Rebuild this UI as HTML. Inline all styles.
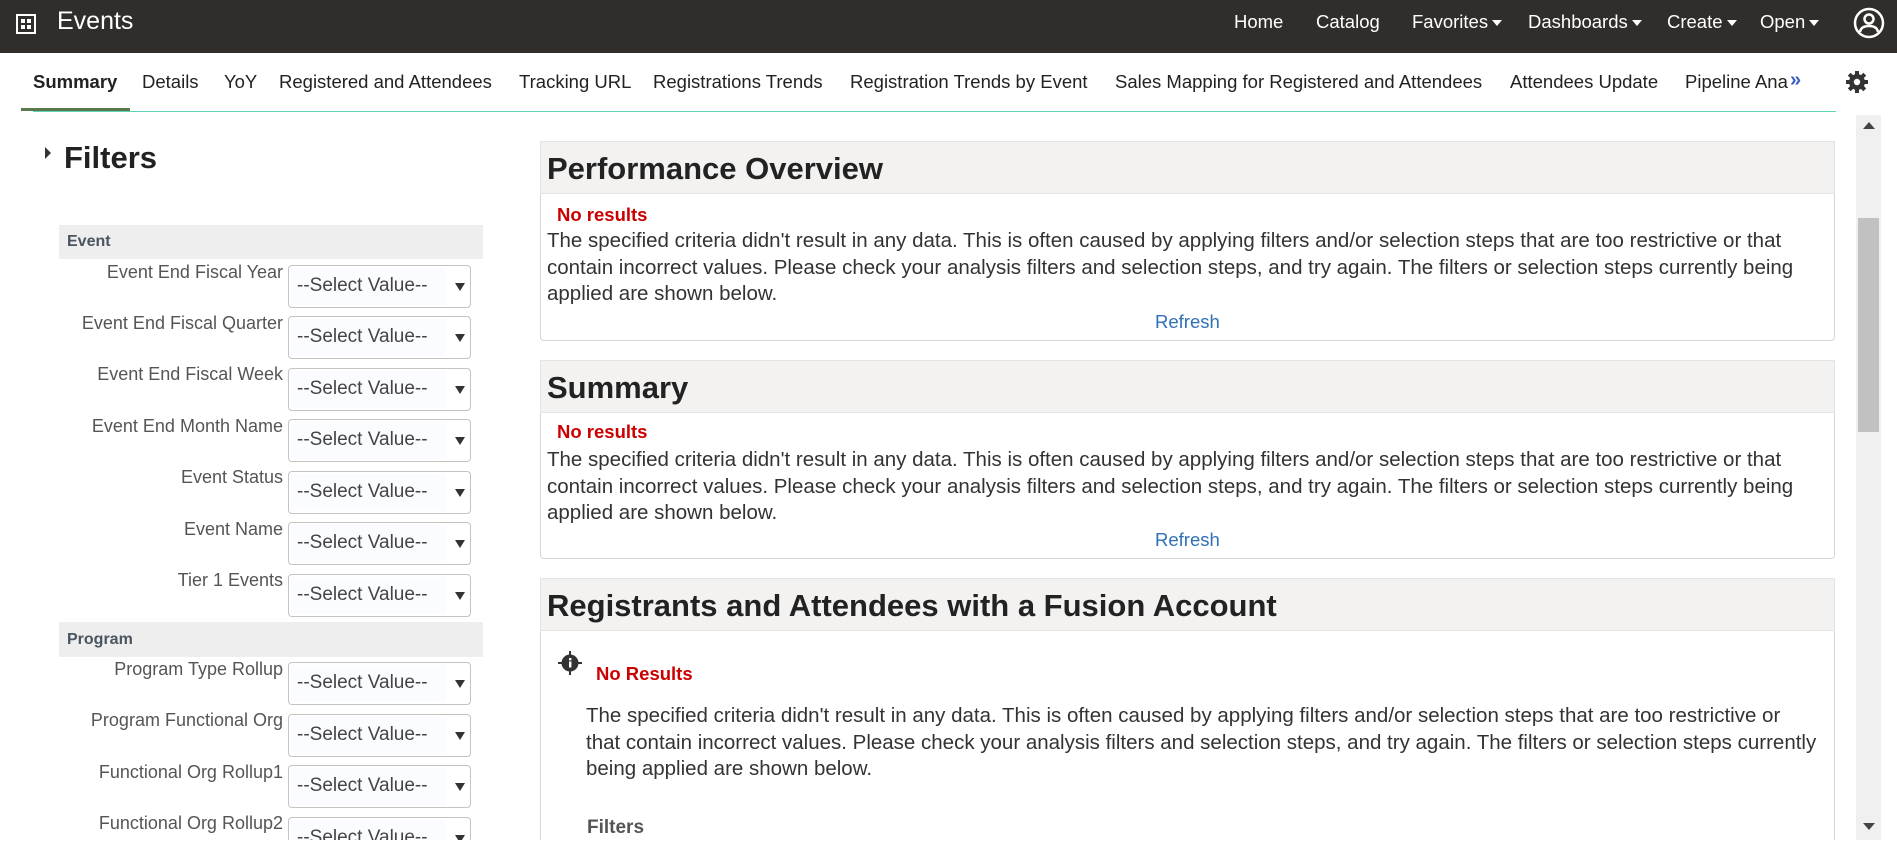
<!DOCTYPE html>
<html><head><meta charset="utf-8">
<style>
*{margin:0;padding:0;box-sizing:border-box}
body{width:1897px;height:857px;overflow:hidden;background:#fff;font-family:"Liberation Sans",sans-serif;position:relative;color:#333}
.a{position:absolute;white-space:nowrap}
.hdr{position:absolute;left:0;top:0;width:1897px;height:53px;background:#312d2a}
.nav{color:#fff;font-size:18.5px;top:11px}
.tri{display:inline-block;width:0;height:0;border-left:5px solid transparent;border-right:5px solid transparent;border-top:6px solid #fff;margin-left:4px;vertical-align:middle}
.tab{font-size:18.5px;color:#222;top:71px}
.lbl{font-size:18px;color:#555;text-align:right;right:1614px}
.sel{position:absolute;left:288px;width:183px;height:43px;border:1px solid #c4c4c4;border-radius:4px;background:#fff}
.sel .in{position:absolute;left:2px;top:2px;width:155px;height:37px;background:#fbfcff;font-size:19px;color:#444;padding:7px 0 0 6px}
.sel .ar{position:absolute;left:166px;top:17px;width:0;height:0;border-left:5px solid transparent;border-right:5px solid transparent;border-top:8px solid #333}
.sec{position:absolute;left:59px;width:424px;background:#eeeeee;font-size:16px;font-weight:bold;color:#4a5560;padding-left:8px}
.ph{position:absolute;left:540px;width:1295px;background:#f3f2f1;border:1px solid #e4e4e4;font-size:31px;font-weight:bold;color:#222;padding-left:6px}
.pb{position:absolute;left:540px;width:1295px;border:1px solid #d4d6dc;border-top:none;border-radius:0 0 4px 4px}
.nr{color:#cc0000;font-weight:bold;font-size:18.5px}
.tx{font-size:20.5px;color:#333;line-height:26.5px}
.rf{color:#2f6fb5;font-size:18.5px}
</style></head><body>
<div class="hdr"></div>
<svg class="a" style="left:16px;top:14px" width="20" height="20" viewBox="0 0 20 20"><rect x="1" y="1" width="18" height="18" fill="none" stroke="#fff" stroke-width="2"/><rect x="5" y="5" width="4" height="4" fill="#fff"/><rect x="11" y="5" width="4" height="4" fill="#fff"/><rect x="5" y="11" width="4" height="4" fill="#fff"/><rect x="11" y="11" width="4" height="4" fill="#fff"/></svg>
<div class="a" style="left:57px;top:7px;color:#fff;font-size:25px">Events</div>
<div class="a nav" style="left:1234px">Home</div>
<div class="a nav" style="left:1316px">Catalog</div>
<div class="a nav" style="left:1412px">Favorites<span class="tri"></span></div>
<div class="a nav" style="left:1528px">Dashboards<span class="tri"></span></div>
<div class="a nav" style="left:1667px">Create<span class="tri"></span></div>
<div class="a nav" style="left:1760px">Open<span class="tri"></span></div>
<svg class="a" style="left:1853px;top:7px" width="32" height="32" viewBox="0 0 32 32"><circle cx="16" cy="16" r="14" fill="none" stroke="#fff" stroke-width="2.5"/><circle cx="16" cy="12" r="4.5" fill="none" stroke="#fff" stroke-width="2.5"/><path d="M7 25 Q8 19 16 19 Q24 19 25 25" fill="none" stroke="#fff" stroke-width="2.5"/></svg>

<div class="a tab" style="left:33px;font-weight:bold">Summary</div>
<div class="a tab" style="left:142px">Details</div>
<div class="a tab" style="left:224px">YoY</div>
<div class="a tab" style="left:279px">Registered and Attendees</div>
<div class="a tab" style="left:519px">Tracking URL</div>
<div class="a tab" style="left:653px">Registrations Trends</div>
<div class="a tab" style="left:850px">Registration Trends by Event</div>
<div class="a tab" style="left:1115px">Sales Mapping for Registered and Attendees</div>
<div class="a tab" style="left:1510px">Attendees Update</div>
<div class="a tab" style="left:1685px">Pipeline Ana</div>
<div class="a" style="left:1790px;top:69px;color:#3b5fc0;font-size:20px;font-weight:bold">»</div>
<svg class="a" style="left:1845px;top:70px" width="24" height="24" viewBox="0 0 24 24"><g fill="#333"><circle cx="12" cy="12" r="8"/><rect x="10" y="1" width="4" height="22"/><rect x="1" y="10" width="22" height="4"/><rect x="10" y="1" width="4" height="22" transform="rotate(45 12 12)"/><rect x="10" y="1" width="4" height="22" transform="rotate(-45 12 12)"/></g><circle cx="12" cy="12" r="3.2" fill="#fff"/></svg>
<div class="a" style="left:21px;top:108px;width:109px;height:3px;background:#5a7a4e"></div>
<div class="a" style="left:33px;top:111px;width:1803px;height:1px;background:#5fd3b5"></div>

<div class="a" style="left:1856px;top:115px;width:25px;height:725px;background:#f0f0f0"></div>
<div class="a" style="left:1858px;top:218px;width:21px;height:214px;background:#c1c1c1"></div>
<div class="a" style="left:1863px;top:122px;border-left:6px solid transparent;border-right:6px solid transparent;border-bottom:7px solid #444"></div>
<div class="a" style="left:1863px;top:823px;border-left:6px solid transparent;border-right:6px solid transparent;border-top:7px solid #444"></div>

<div class="a" style="left:45px;top:147px;border-top:6px solid transparent;border-bottom:6px solid transparent;border-left:6px solid #333"></div>
<div class="a" style="left:64px;top:140px;font-size:31px;font-weight:bold;color:#222">Filters</div>

<div class="sec" style="top:225px;height:34px;line-height:34px">Event</div>
<div class="a lbl" style="top:262px">Event End Fiscal Year</div><div class="sel" style="top:265px"><div class="in">--Select Value--</div><div class="ar"></div></div>
<div class="a lbl" style="top:313px">Event End Fiscal Quarter</div><div class="sel" style="top:316px"><div class="in">--Select Value--</div><div class="ar"></div></div>
<div class="a lbl" style="top:364px">Event End Fiscal Week</div><div class="sel" style="top:368px"><div class="in">--Select Value--</div><div class="ar"></div></div>
<div class="a lbl" style="top:416px">Event End Month Name</div><div class="sel" style="top:419px"><div class="in">--Select Value--</div><div class="ar"></div></div>
<div class="a lbl" style="top:467px">Event Status</div><div class="sel" style="top:471px"><div class="in">--Select Value--</div><div class="ar"></div></div>
<div class="a lbl" style="top:519px">Event Name</div><div class="sel" style="top:522px"><div class="in">--Select Value--</div><div class="ar"></div></div>
<div class="a lbl" style="top:570px">Tier 1 Events</div><div class="sel" style="top:574px"><div class="in">--Select Value--</div><div class="ar"></div></div>
<div class="sec" style="top:622px;height:35px;line-height:35px">Program</div>
<div class="a lbl" style="top:659px">Program Type Rollup</div><div class="sel" style="top:662px"><div class="in">--Select Value--</div><div class="ar"></div></div>
<div class="a lbl" style="top:710px">Program Functional Org</div><div class="sel" style="top:714px"><div class="in">--Select Value--</div><div class="ar"></div></div>
<div class="a lbl" style="top:762px">Functional Org Rollup1</div><div class="sel" style="top:765px"><div class="in">--Select Value--</div><div class="ar"></div></div>
<div class="a lbl" style="top:813px">Functional Org Rollup2</div><div class="sel" style="top:817px;height:23px;border-bottom:none;border-radius:4px 4px 0 0;overflow:hidden"><div class="in">--Select Value--</div><div class="ar"></div></div>

<div class="ph" style="top:141px;height:53px;line-height:53px">Performance Overview</div>
<div class="pb" style="top:194px;height:147px"></div>
<div class="a nr" style="left:557px;top:204px">No results</div>
<div class="a tx" style="left:547px;top:228px">The specified criteria didn't result in any data. This is often caused by applying filters and/or selection steps that are too restrictive or that<br>contain incorrect values. Please check your analysis filters and selection steps, and try again. The filters or selection steps currently being<br>applied are shown below.</div>
<div class="a rf" style="left:1155px;top:311px">Refresh</div>

<div class="ph" style="top:360px;height:53px;line-height:53px">Summary</div>
<div class="pb" style="top:413px;height:146px"></div>
<div class="a nr" style="left:557px;top:421px">No results</div>
<div class="a tx" style="left:547px;top:447px">The specified criteria didn't result in any data. This is often caused by applying filters and/or selection steps that are too restrictive or that<br>contain incorrect values. Please check your analysis filters and selection steps, and try again. The filters or selection steps currently being<br>applied are shown below.</div>
<div class="a rf" style="left:1155px;top:529px">Refresh</div>

<div class="ph" style="top:578px;height:53px;line-height:53px">Registrants and Attendees with a Fusion Account</div>
<div class="pb" style="top:631px;height:209px;border-bottom:none;border-radius:0"></div>
<svg class="a" style="left:557px;top:650px" width="26" height="26" viewBox="0 0 26 26"><g fill="#333"><circle cx="13" cy="13" r="8.5"/><rect x="12" y="1" width="2" height="24"/><rect x="1" y="12" width="24" height="2"/></g><rect x="12" y="8" width="2.4" height="2.4" fill="#fff"/><rect x="12" y="11.5" width="2.4" height="6" fill="#fff"/></svg>
<div class="a nr" style="left:596px;top:663px">No Results</div>
<div class="a tx" style="left:586px;top:703px">The specified criteria didn't result in any data. This is often caused by applying filters and/or selection steps that are too restrictive or<br>that contain incorrect values. Please check your analysis filters and selection steps, and try again. The filters or selection steps currently<br>being applied are shown below.</div>
<div class="a" style="left:587px;top:817px;font-size:19px;font-weight:bold;color:#555">Filters</div>
<div class="a" style="left:0;top:840px;width:1897px;height:17px;background:#fff"></div>
</body></html>
